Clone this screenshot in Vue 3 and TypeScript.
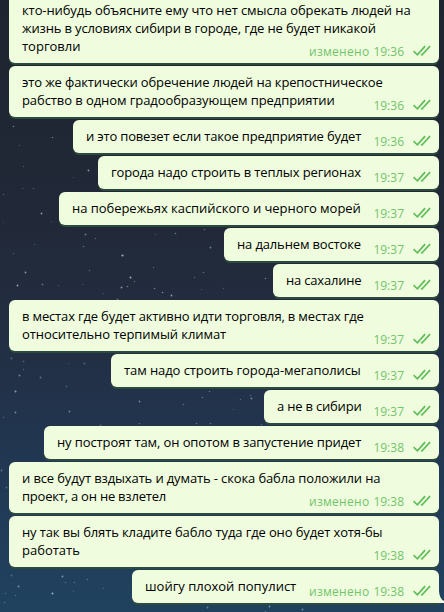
<script setup lang="ts">
interface Line {
  text: string
  tracking: number
}

interface Message {
  lines: Line[]
  time: string
  edited?: boolean
  left: number
}

const line = (text: string, tracking = 0): Line => ({ text, tracking })

const messages: Message[] = [
  { lines: [line('кто-нибудь объясните ему что нет смысла обрекать людей на', -0.1), line('жизнь в условиях сибири в городе, где не будет никакой', -0.14), line('торговли')], time: '19:36', edited: true, left: 9 },
  { lines: [line('это же фактически обречение людей на крепостническое', -0.14), line('рабство в одном градообразующем предприятии', -0.08)], time: '19:36', left: 9 },
  { lines: [line('и это повезет если такое предприятие будет', -0.18)], time: '19:36', left: 73 },
  { lines: [line('города надо строить в теплых регионах', -0.11)], time: '19:37', left: 98 },
  { lines: [line('на побережьях каспийского и черного морей', -0.04)], time: '19:37', left: 59 },
  { lines: [line('на дальнем востоке', -0.14)], time: '19:37', left: 224 },
  { lines: [line('на сахалине', -0.2)], time: '19:37', left: 273 },
  { lines: [line('в местах где будет активно идти торговля, в местах где', -0.16), line('относительно терпимый климат', -0.09)], time: '19:37', left: 9 },
  { lines: [line('там надо строить города-мегаполисы', -0.08)], time: '19:37', left: 111 },
  { lines: [line('а не в сибири', -0.2)], time: '19:37', left: 264 },
  { lines: [line('ну построят там, он опотом в запустение придет', -0.11)], time: '19:38', left: 44 },
  { lines: [line('и все будут вздыхать и думать - скока бабла положили на', -0.13), line('проект, а он не взлетел', -0.22)], time: '19:38', edited: true, left: 9 },
  { lines: [line('ну так вы блять кладите бабло туда где оно будет хотя-бы', -0.12), line('работать')], time: '19:38', left: 9 },
  { lines: [line('шойгу плохой популист')], time: '19:38', edited: true, left: 132 },
]

// x, y, radius, opacity
const stars: number[][] = [
  [13, 126, 0.8, 0.6], [52, 137, 0.8, 0.6], [19, 145, 0.7, 0.3], [23, 166, 0.7, 0.3],
  [88, 170, 0.9, 0.8], [73, 177, 0.7, 0.25], [3, 194, 0.8, 0.35], [22, 188, 0.7, 0.3], [33, 188, 0.8, 0.35],
  [41, 213, 0.9, 0.8], [51, 221, 0.7, 0.25], [85, 234, 0.9, 0.6], [95, 238, 0.8, 0.45], [83, 246, 0.8, 0.45],
  [34, 244, 0.7, 0.3], [13, 253, 0.7, 0.35], [155, 234, 0.7, 0.25], [175, 233, 0.8, 0.55], [204, 229, 0.8, 0.4],
  [210, 247, 0.9, 0.6], [122, 255, 1.1, 0.95], [89, 270, 0.8, 0.4], [25, 272, 0.9, 0.8], [17, 285, 0.9, 0.9],
  [42, 284, 0.9, 0.5], [58, 285, 0.7, 0.3], [82, 284, 0.7, 0.3], [130, 277, 1, 0.95], [134, 281, 0.7, 0.5],
  [121, 287, 0.9, 0.8], [127, 286, 0.8, 0.6], [153, 267, 0.7, 0.4], [154, 288, 0.8, 0.6], [162, 292, 0.8, 0.7],
  [171, 295, 0.9, 0.8], [117, 299, 1.1, 0.4], [194, 277, 0.7, 0.4], [203, 272, 0.8, 0.45], [201, 289, 0.7, 0.25],
  [103, 293, 0.7, 0.25], [265, 278, 0.8, 0.6], [223, 288, 0.7, 0.3],
  [11, 358, 1, 0.4], [23, 361, 1, 0.3], [84, 363, 1, 0.35], [68, 363, 0.7, 0.25], [19, 375, 0.9, 0.65],
  [23, 369, 0.7, 0.4], [40, 377, 0.9, 0.5], [66, 386, 0.9, 0.35], [15, 391, 1, 0.8], [15, 412, 0.9, 0.65],
  [3, 417, 0.8, 0.35], [69, 411, 0.9, 0.6], [139, 401, 0.9, 0.65], [183, 404, 0.8, 0.45], [202, 397, 0.8, 0.5],
  [209, 391, 0.8, 0.5], [139, 423, 0.8, 0.4], [196, 423, 0.8, 0.5], [210, 423, 0.8, 0.45], [100, 425, 0.9, 0.4],
  [250, 395, 0.8, 0.4], [251, 398, 1, 0.55], [240, 399, 0.8, 0.4], [233, 409, 0.7, 0.25], [261, 424, 0.9, 0.3],
  [1, 470, 0.9, 0.5], [6, 487, 0.9, 0.4], [11, 575, 0.9, 0.4], [18, 586, 1, 0.65], [15, 595, 0.7, 0.4],
  [62, 576, 1, 0.7], [52, 593, 1, 0.95], [65, 582, 0.8, 0.4], [74, 582, 0.8, 0.4], [87, 579, 0.8, 0.4],
  [5, 593, 0.7, 0.4], [4, 602, 0.7, 0.4], [73, 591, 0.7, 0.3], [103, 588, 0.7, 0.3], [207, 607, 0.9, 0.55],
  [269, 606, 0.9, 0.7], [302, 609, 1, 0.6], [265, 611, 0.8, 0.4], [3, 222, 0.7, 0.2],
]
</script>

<template>
  <main class="chat">
    <svg class="sky" viewBox="0 0 444 612" aria-hidden="true">
      <circle v-for="(s, i) in stars" :key="i" :cx="s[0] + 0.5" :cy="s[1] + 0.5" :r="s[2]" :opacity="s[3] * 0.8" fill="#b9dce6" />
    </svg>
    <div class="history">
      <article v-for="(m, i) in messages" :key="i" class="bubble" :class="{ last: i === messages.length - 1 }" :style="{ width: 439 - m.left + 'px' }">
        <p class="text">
          <span v-for="l in m.lines" :key="l.text" class="line" :style="{ letterSpacing: l.tracking + 'px' }">{{ l.text }}</span>
        </p>
        <footer class="meta">
          <span v-if="m.edited" class="edited">изменено</span>
          <time>{{ m.time }}</time>
          <svg class="checks" width="18" height="12" viewBox="0 0 18 12" aria-hidden="true">
            <path d="M0.5 6.1 4.4 9.8 12.1 1.1M8 9.4 8.9 10 17.1 1.1" />
          </svg>
        </footer>
        <svg v-if="i === messages.length - 1" class="tail" width="6" height="12" viewBox="0 0 6 12" aria-hidden="true">
          <path d="M0 0C0.3 5 2 9 6 10.6V12H0Z" />
        </svg>
      </article>
    </div>
  </main>
</template>

<style>
body {
  margin: 0;
  overflow: hidden;
}
</style>

<style scoped>
.chat {
  position: relative;
  width: 444px;
  height: 612px;
  overflow: hidden;
  background: linear-gradient(180deg, #1f2530 0%, #202735 25%, #222b3c 45%, #22324a 65%, #213b57 83%, #20425f 100%);
  font-family: "Open Sans", "Noto Sans", sans-serif;
}

.sky {
  position: absolute;
  inset: 0;
  width: 444px;
  height: 612px;
}

.history {
  position: relative;
  display: flex;
  flex-direction: column;
  align-items: flex-end;
  gap: 3px;
  margin-top: -6px;
  padding-right: 5px;
}

.bubble {
  position: relative;
  box-sizing: border-box;
  display: flex;
  justify-content: space-between;
  padding: 7px 8px 8px 13px;
  border-radius: 6px;
  background: #effdde;
  box-shadow: 0 2px 0 #2d4b3d;
}

.bubble.last {
  border-bottom-right-radius: 0;
}

.text {
  margin: 0;
  width: 0;
  color: #000;
  font-size: 13px;
  line-height: 18px;
}

.line {
  display: block;
  white-space: nowrap;
}

.meta {
  display: flex;
  align-items: center;
  align-self: flex-end;
  gap: 4px;
  height: 18px;
  margin-bottom: -5px;
  color: #72c46b;
  font-size: 12px;
  line-height: 18px;
}

.meta time,
.edited {
  padding-top: 2px;
}

.edited {
  letter-spacing: 0.28px;
}

.checks {
  margin-left: 5px;
  fill: none;
  stroke: #5fbd59;
  stroke-width: 1.7;
}

.tail {
  position: absolute;
  right: -6px;
  bottom: 0;
  fill: #effdde;
}
</style>
